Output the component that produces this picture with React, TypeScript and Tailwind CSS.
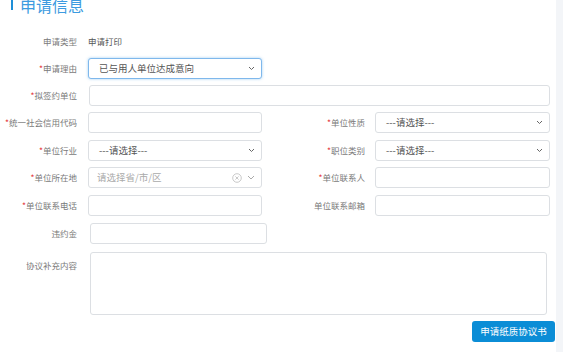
import React from "react";

const font = { fontFamily: '"Noto Sans CJK SC", "Noto Sans", sans-serif' };

function Chevron() {
  return (
    <svg width="7" height="5" viewBox="0 0 7 5" className="shrink-0">
      <path d="M1 1 L3.5 3.5 L6 1" fill="none" stroke="#666" strokeWidth="1" />
    </svg>
  );
}

function Label({ text, req, w }: { text: string; req?: boolean; w: string }) {
  return (
    <div className={`${w} shrink-0 text-right text-[8.5px] leading-none text-[#7a7a7a] whitespace-nowrap`}>
      {req && <span className="text-[#e4393c]">*</span>}
      {text}
    </div>
  );
}

function Input({ w, ml = "ml-[11px]" }: { w: string; ml?: string }) {
  return <div className={`${w} ${ml} h-[21px] border border-[#dcdfe3] rounded-[3px] bg-white`} />;
}

function Select({ w, ml = "ml-[11px]", text, focus }: { w: string; ml?: string; text: string; focus?: boolean }) {
  return (
    <div
      className={`${w} ${ml} h-[21px] rounded-[3px] bg-white flex items-center justify-between pl-[10px] pr-[6px] border ${
        focus ? "border-[#7fb8ec] shadow-[0_0_3px_rgba(102,175,233,0.6)]" : "border-[#dcdfe3]"
      }`}
    >
      <span className="text-[9.5px] text-[#555] leading-none">{text}</span>
      <Chevron />
    </div>
  );
}

export default function App() {
  return (
    <div className="w-[563px] h-[352px] bg-[#f3f5f8] overflow-hidden flex" style={font}>
      <div className="w-[556px] h-full bg-white relative">
        <div className="flex items-start h-[14px] overflow-visible">
          <div className="ml-[11px] w-[2px] h-[10px] bg-[#1e8fd8]" />
          <div className="ml-[7px] -mt-[4px] text-[16px] leading-[18px] text-[#3d9be0]">申请信息</div>
        </div>

        {/* 申请类型 */}
        <div className="flex items-center mt-[22px] h-[10px]">
          <Label text="申请类型" w="w-[77px]" />
          <div className="ml-[11px] text-[8.5px] leading-none text-[#555]">申请打印</div>
        </div>

        <div className="flex items-center mt-[12px]">
          <Label text="申请理由" req w="w-[77px]" />
          <Select w="w-[174px]" text="已与用人单位达成意向" focus />
        </div>

        <div className="flex items-center mt-[6px]">
          <Label text="拟签约单位" req w="w-[77px]" />
          <Input w="w-[461px]" ml="ml-[12px]" />
        </div>

        <div className="flex items-center mt-[6px]">
          <Label text="统一社会信用代码" req w="w-[77px]" />
          <Input w="w-[174px]" />
          <Label text="单位性质" req w="w-[103px]" />
          <Select w="w-[175px]" ml="ml-[10px]" text="---请选择---" />
        </div>

        <div className="flex items-center mt-[7px]">
          <Label text="单位行业" req w="w-[77px]" />
          <Select w="w-[174px]" text="---请选择---" />
          <Label text="职位类别" req w="w-[103px]" />
          <Select w="w-[175px]" ml="ml-[10px]" text="---请选择---" />
        </div>

        <div className="flex items-center mt-[6px]">
          <Label text="单位所在地" req w="w-[77px]" />
          <div className="w-[174px] ml-[11px] h-[21px] border border-[#dcdfe3] rounded-[3px] bg-white flex items-center pl-[8px] pr-[6px]">
            <span className="text-[9.5px] text-[#aaa] leading-none flex-1">请选择省/市/区</span>
            <svg width="10" height="10" viewBox="0 0 10 10" className="mr-[5px]">
              <circle cx="5" cy="5" r="4.3" fill="none" stroke="#bbb" strokeWidth="0.8" />
              <path d="M3.4 3.4 L6.6 6.6 M6.6 3.4 L3.4 6.6" stroke="#bbb" strokeWidth="0.8" />
            </svg>
            <svg width="8" height="5" viewBox="0 0 8 5">
              <path d="M1 1 L4 4 L7 1" fill="none" stroke="#aaa" strokeWidth="1" />
            </svg>
          </div>
          <Label text="单位联系人" req w="w-[103px]" />
          <Input w="w-[175px]" ml="ml-[10px]" />
        </div>

        <div className="flex items-center mt-[7px]">
          <Label text="单位联系电话" req w="w-[77px]" />
          <Input w="w-[174px]" />
          <Label text="单位联系邮箱" w="w-[103px]" />
          <Input w="w-[175px]" ml="ml-[10px]" />
        </div>

        <div className="flex items-center mt-[7px]">
          <Label text="违约金" w="w-[77px]" />
          <Input w="w-[177px]" ml="ml-[13px]" />
        </div>

        <div className="flex items-start mt-[8px]">
          <div className="pt-[9px]">
            <Label text="协议补充内容" w="w-[77px]" />
          </div>
          <div className="w-[457px] ml-[13px] h-[63px] border border-[#dcdfe3] rounded-[3px] bg-white" />
        </div>

        <div className="flex justify-end mt-[6px] pr-[1px]">
          <div className="w-[83px] h-[21px] rounded-[3px] bg-[#0b8dd6] text-white text-[9.5px] leading-none flex items-center justify-center">
            申请纸质协议书
          </div>
        </div>
      </div>
    </div>
  );
}
